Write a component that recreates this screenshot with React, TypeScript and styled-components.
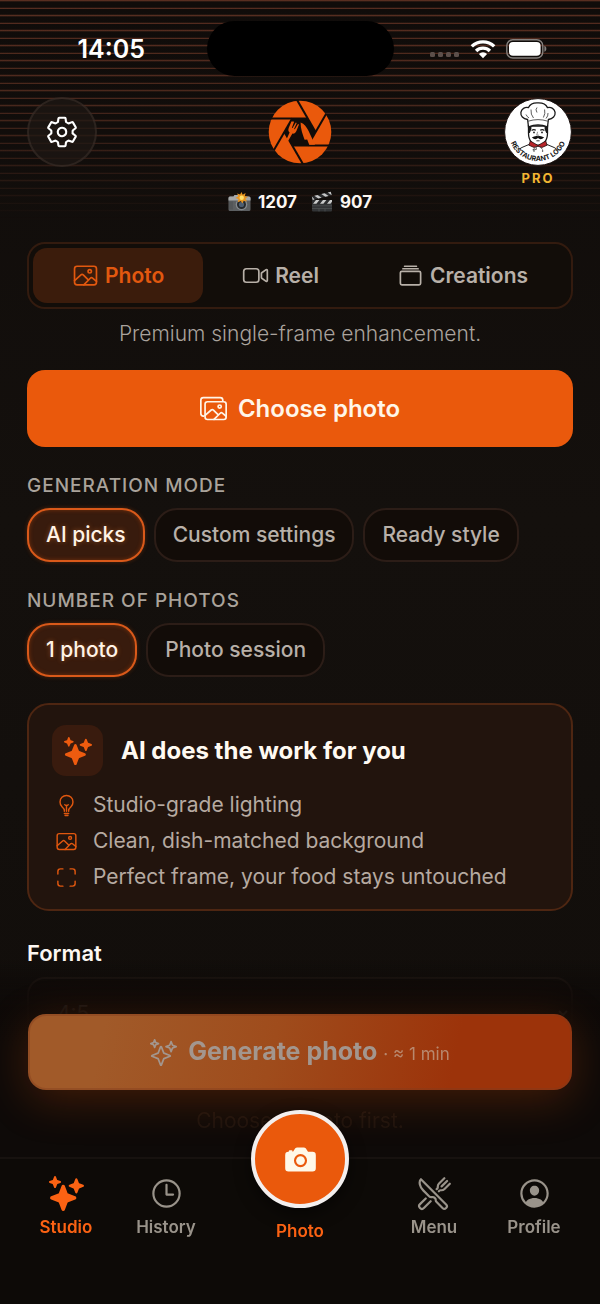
import React, { useState } from "react";
import styled, { createGlobalStyle, css } from "styled-components";
import {
  IoAlbumsOutline,
  IoBulbOutline,
  IoCamera,
  IoImageOutline,
  IoImagesOutline,
  IoPersonCircleOutline,
  IoRestaurantOutline,
  IoScanOutline,
  IoSettingsOutline,
  IoSparkles,
  IoSparklesOutline,
  IoTimeOutline,
  IoVideocamOutline,
} from "react-icons/io5";

const GlobalStyle = createGlobalStyle`
  *, *::before, *::after { box-sizing: border-box; }
  body { margin: 0; background: #120e0b; }
  button, select { font: inherit; color: inherit; margin: 0; }
  button { border: 0; padding: 0; background: none; cursor: pointer; }
  svg { display: block; flex: none; }
`;

const Page = styled.div`
  position: relative;
  min-height: 100vh;
  font-family: Inter, "Liberation Sans", sans-serif;
  font-size: 21px;
  line-height: 24px;
  color: #b3aba4;
  background: linear-gradient(#100c0a, #14100d 40%, #110d0a);
`;

/* Thin horizontal lines that fade out below the header. */
const Backdrop = styled.div`
  position: absolute;
  inset: 0 0 auto;
  height: 222px;
  background: repeating-linear-gradient(
    rgba(168, 84, 58, 0.48) 0 1px,
    rgba(168, 84, 58, 0.16) 1px 2px,
    transparent 2px 7px,
    rgba(168, 84, 58, 0.12) 7px 8px,
    rgba(168, 84, 58, 0.46) 8px 9px,
    transparent 9px 14px,
    rgba(168, 84, 58, 0.12) 14px 15px
  );
  mask-image: linear-gradient(#000, rgba(0, 0, 0, 0.8) 45%, rgba(0, 0, 0, 0.5) 70%, transparent);
`;

const StatusBar = styled.div`
  position: relative;
  display: grid;
  grid-template-columns: 1fr 187px 1fr;
  align-items: center;
  padding-top: 21px;
  color: #fff;
`;

const Clock = styled.time`
  padding-left: 16px;
  text-align: center;
  font-size: 25px;
  line-height: 30px;
  font-weight: 600;
`;

const Island = styled.div`
  height: 55px;
  border-radius: 28px;
  background: #000;
`;

const Indicators = styled.div`
  display: flex;
  align-items: center;
  justify-content: center;
  gap: 10px;
  padding-right: 17px;
`;

const Header = styled.header`
  position: relative;
  display: grid;
  grid-template-columns: 1fr auto 1fr;
  align-items: start;
  padding: 21px 27px 0;
`;

const RoundButton = styled.button`
  display: grid;
  place-items: center;
  width: 70px;
  height: 70px;
  border: 2px solid rgba(255, 220, 200, 0.08);
  border-radius: 50%;
  background: rgba(30, 23, 20, 0.72);
  color: #fff;
  font-size: 34px;
`;

const Brand = styled.div`
  display: grid;
  place-items: center;
  height: 70px;
`;

const Account = styled.button`
  justify-self: end;
  display: flex;
  flex-direction: column;
  align-items: center;
  gap: 2px;
  width: 70px;
`;

const Plan = styled.span`
  font-size: 13px;
  line-height: 18px;
  font-weight: 700;
  letter-spacing: 2px;
  color: #f2b632;
`;

const Credits = styled.div`
  position: relative;
  display: flex;
  justify-content: center;
  gap: 14px;
  margin-top: 4px;
`;

const Credit = styled.span`
  display: flex;
  align-items: center;
  gap: 7px;
  font-size: 17px;
  line-height: 20px;
  font-weight: 700;
  color: #fdf8f3;
`;

const Main = styled.main`
  position: relative;
  padding: 29px 27px 230px;
`;

const Tabs = styled.div`
  display: flex;
  padding: 4px;
  border: 2px solid #331b0f;
  border-radius: 18px;
  background: #120d09;
`;

const Tab = styled.button<{ $active: boolean }>`
  flex: 1 1 auto;
  display: flex;
  align-items: center;
  justify-content: center;
  gap: 6px;
  height: 55px;
  border-radius: 14px;
  font-weight: 600;
  color: ${(p) => (p.$active ? "#e2580f" : "#b8b0a8")};
  background: ${(p) => (p.$active ? "#3b1c0c" : "transparent")};
  svg { font-size: 27px; }
`;

const Tagline = styled.p`
  margin: 13px 0 24px;
  text-align: center;
  font-weight: 300;
  color: #aaa39d;
`;

const ActionButton = styled.button`
  display: flex;
  align-items: center;
  justify-content: center;
  gap: 11px;
  width: 100%;
  height: 77px;
  border-radius: 18px;
  font-size: 24px;
  line-height: 28px;
  font-weight: 600;
  color: #fff6e9;
  background: #ea590c;
  svg { font-size: 27px; }
`;

const Group = styled.section`
  margin-top: 27px;
`;

const GroupTitle = styled.h2`
  margin: 0 0 10px;
  font-size: 19px;
  line-height: 24px;
  font-weight: 500;
  letter-spacing: 1px;
  text-transform: uppercase;
  color: #aaa39b;
`;

const Chips = styled.div`
  display: flex;
  gap: 9px;
`;

const Chip = styled.button<{ $active: boolean }>`
  height: 54px;
  padding: 0 17px;
  border: 2px solid #2c1d17;
  border-radius: 23px;
  font-weight: 500;
  color: #b8b0a8;
  background: #120c08;
  ${(p) =>
    p.$active &&
    css`
      border-color: #d9591a;
      color: #fff3e6;
      background: #381b0d;
      text-shadow: 0 0 5px rgba(255, 140, 60, 0.4);
      box-shadow: 0 0 4px rgba(234, 89, 12, 0.3), inset 0 0 4px rgba(234, 89, 12, 0.35);
    `}
`;

const Card = styled.section`
  margin-top: 26px;
  padding: 20px 23px 14px;
  border: 2px solid #4e2612;
  border-radius: 22px;
  background: #22140d;
`;

const CardHead = styled.div`
  display: flex;
  align-items: center;
  gap: 18px;
  margin-bottom: 11px;
`;

const IconTile = styled.span`
  display: grid;
  place-items: center;
  width: 51px;
  height: 51px;
  border-radius: 14px;
  background: #391b0e;
  color: #ee5b0f;
  font-size: 28px;
`;

const CardTitle = styled.h2`
  margin: 0;
  font-size: 24px;
  line-height: 28px;
  font-weight: 700;
  color: #fffaf2;
`;

const Features = styled.ul`
  margin: 0;
  padding: 0;
  list-style: none;
`;

const Feature = styled.li`
  display: flex;
  align-items: center;
  gap: 15px;
  height: 36px;
  padding-left: 3px;
  color: #b6aaa1;
  svg { font-size: 23px; color: #e0570f; }
`;

const FieldLabel = styled.label`
  display: block;
  margin: 30px 0 12px;
  font-size: 22px;
  font-weight: 600;
  color: #fdf8f3;
`;

const Select = styled.select`
  display: block;
  width: 100%;
  height: 72px;
  padding: 0 24px;
  border: 2px solid #261c17;
  border-radius: 18px;
  background: #120d0a;
`;

/* Stays over the scrolled page: the submit area and the navigation. */
const Dock = styled.div`
  position: fixed;
  inset: auto 0 0;
`;

const Submit = styled.div`
  padding: 54px 28px 0;
  height: 197px;
  overflow: hidden;
  text-align: center;
  background: linear-gradient(rgba(14, 10, 8, 0), rgba(14, 10, 8, 0.6) 10%, rgba(14, 10, 8, 0.95) 24%, #0e0a08 44%);
`;

const GenerateButton = styled(ActionButton)`
  height: 76px;
  border: 2px solid rgba(130, 60, 30, 0.4);
  font-size: 25px;
  font-weight: 700;
  color: #a3968e;
  background: linear-gradient(102deg, #a15a29 14%, #9f4c1c 45%, #9c330a 78%) border-box;
  box-shadow: 0 10px 44px rgba(190, 70, 10, 0.3);
`;

const Estimate = styled.small`
  margin-left: 6px;
  font-size: 17px;
  font-weight: 400;
  color: #b8886e;
`;

const Hint = styled.p`
  margin: 19px 0 0;
  color: rgba(170, 110, 70, 0.1);
`;

const Nav = styled.nav`
  position: relative;
  display: grid;
  grid-template-columns: 1fr 1fr 168px 1fr 1fr;
  align-items: start;
  height: 147px;
  padding: 0 16px;
  border-top: 2px solid #17120f;
  background: #0d0a07;
`;

const NavItem = styled.button<{ $active?: boolean }>`
  display: flex;
  flex-direction: column;
  align-items: center;
  gap: 4px;
  padding-top: 17px;
  font-size: 17px;
  line-height: 24px;
  font-weight: 600;
  color: ${(p) => (p.$active ? "#fb6213" : "#99938a")};
  svg { font-size: 35px; }
`;

const CaptureItem = styled(NavItem)`
  gap: 11px;
  margin-top: -49px;
  padding-top: 0;
`;

const Capture = styled.span`
  display: grid;
  place-items: center;
  width: 98px;
  height: 98px;
  border: 4px solid #f3efee;
  border-radius: 50%;
  background: #ea590c;
  color: #fff8e8;
  box-shadow: 0 6px 16px rgba(0, 0, 0, 0.5);
`;

function SignalDots() {
  return (
    <svg width="30" height="18" viewBox="0 0 30 18" fill="#5c4f4a" aria-hidden="true">
      {[0, 8, 16, 24].map((x) => (
        <rect key={x} x={x} y="12" width="5" height="5" rx="1.5" />
      ))}
    </svg>
  );
}

function Wifi() {
  return (
    <svg width="26" height="20" viewBox="0 0 26 20" aria-hidden="true">
      <g fill="none" stroke="#fff" strokeWidth="3.4">
        <path d="M1.8 7.4a16 16 0 0 1 22.4 0" />
        <path d="M6.1 12a9.8 9.8 0 0 1 13.8 0" />
      </g>
      <path d="M13 19.2 8.9 15a5.8 5.8 0 0 1 8.200 0z" fill="#fff" />
    </svg>
  );
}

function Battery() {
  return (
    <svg width="41" height="20" viewBox="0 0 41 20" aria-hidden="true">
      <rect x="0.8" y="0.8" width="36" height="18.2" rx="6" fill="none" stroke="#85807d" strokeWidth="1.4" />
      <rect x="3" y="3" width="31.6" height="13.8" rx="4" fill="#fff" />
      <path d="M38.4 6.8c2.6.8 2.6 5.2 0 6z" fill="#85807d" />
    </svg>
  );
}

function ApertureLogo() {
  return (
    <svg width="64" height="64" viewBox="-32 -32 64 64" role="img" aria-label="Studio logo">
      <circle r="31.3" fill="#ea590c" />
      <path d="M-15.6 0-7.8-13.5H7.8L15.6 0 7.8 13.5H-7.8z" fill="#120c09" />
      <g stroke="#120c09" strokeWidth="2">
        {[0, 60, 120, 180, 240, 300].map((a) => (
          <path key={a} d="M-29-13.5H8" transform={`rotate(${a})`} />
        ))}
      </g>
      <g fill="#ea590c">
        <path d="M-8.6-10.400-11.200-4.200c-.8 2-.6 3.600.8 4.800L-14 8.600l1.800 1L-7.600 1.600c2 .2 3.200-.8 4-2.600l2.600-6.400-1-.5-3.200 5.200-.7-.4 2.600-5.900-.9-.4-3.200 5.400-.7-.3 2.200-6-.9-.3z" />
        <path d="M.6-9.600c3.800 1.200 6 4.400 8 8.600L15 12.800H9.200L7.200 7.600 4.600 7.800C2.800 2.600.400-3.400.6-9.600z" />
      </g>
    </svg>
  );
}

function ChefLogo() {
  return (
    <svg width="70" height="70" viewBox="0 0 70 70" role="img" aria-label="Restaurant logo">
      <defs>
        <path id="badge-curve" d="M5.600 37A29.500 29.500 0 0 0 64.400 37" />
      </defs>
      <circle cx="35" cy="35" r="33.4" fill="#fff" stroke="#1b1210" strokeWidth="1" />
      <path d="M26 47.5 20 50q-2 .7-3.4 2M44 47.5l6 2.5q2 .7 3.4 2" fill="none" stroke="#222" strokeWidth="1" strokeLinecap="round" />
      <path d="M25.5 29v7c0 8 4.500 12.500 9.500 12.500S44.500 44 44.500 36v-7z" fill="#fff" stroke="#1a1a1a" strokeWidth="1.300" />
      <path d="M25.400 28.500h3v3.600l-1.600 3.900h-1.400zM44.600 28.500h-3v3.600l1.600 3.900h1.400z" fill="#1a1a1a" />
      <path d="M28.600 33.400q2-1.300 4.200-.2M37.200 33.200q2.200-1.100 4.200.2" fill="none" stroke="#1a1a1a" strokeWidth="1.200" />
      <circle cx="31" cy="35.400" r=".9" fill="#1a1a1a" />
      <circle cx="39" cy="35.400" r=".9" fill="#1a1a1a" />
      <path d="M34.600 34.800l-.9 3.400h2.400" fill="none" stroke="#444" strokeWidth=".6" />
      <path d="M35 39.300c-2.400-1-4 .3-6.200 1 2.200 2.400 4.700 2.200 6.200.8 1.500 1.400 4 1.600 6.200-.8-2.200-.7-3.800-2-6.200-1z" fill="#111" />
      <path d="M33.400 43.800h3.200" stroke="#222" strokeWidth=".9" />
      <path d="M27.300 44 35 48.400 42.700 44l1.400 4.200-5 2.200L35 49.300l-4.100 1.100-5-2.200z" fill="#b8252a" stroke="#231010" strokeWidth=".8" />
      <path d="M33 49.600 29.800 53l3.600-.6zM37 49.600l2.600 3" fill="#fff" stroke="#222" strokeWidth=".7" />
      <circle cx="31" cy="54" r=".7" fill="#222" />
      <circle cx="39.600" cy="54" r=".7" fill="#222" />
      <path
        d="M25.500 29.800 24.600 22.500c-4.600-.6-7.200-3.700-6.700-7.100.5-3.600 4-5.600 7.600-4.800C27 7.300 30.800 5.700 34.800 5.900c4.400-.2 8.200 1.500 9.700 4.700 3.700-.8 7.100 1.200 7.600 4.800.4 3.400-2.200 6.500-6.700 7.100l-.9 7.300c-5.700-2.300-13.300-2.300-19 0z"
        fill="#fff"
        stroke="#1a1a1a"
        strokeWidth="1.300"
      />
      <path d="M25.200 24.200q9.800-3.200 19.600 0M28 12.500q-.5 5 2.500 8.500M34 10.500q-2 2 0 5M41.600 12.500q1 4-1.200 8M45 16q.3 3-2 5.500M23 17.500q1.200 2.500 3 3.500" fill="none" stroke="#333" strokeWidth=".8" />
      <text fontFamily="Inter, sans-serif" fontSize="7" fontWeight="700" fill="#161616" textAnchor="middle">
        <textPath href="#badge-curve" startOffset="50%">
          RESTAURANT LOGO
        </textPath>
      </text>
    </svg>
  );
}

function FlashCamera() {
  return (
    <svg width="23" height="20" viewBox="0 0 23 20" aria-hidden="true">
      <path d="M1.500 4.500h4l1-1.500h4l1 1.500h9.500q1.500 0 1.500 1.500v11.500q0 1.500-1.500 1.500h-19Q.5 19 .5 17.500V6q0-1 1-1.500z" fill="#5c5f61" />
      <path d="M.5 6q0-1.500 1.500-1.500h3.500l1-1.500h4l1 1.500H21q1.500 0 1.500 1.500v2.500H.5z" fill="#a5a7a8" />
      <path d="M2 9.500v8M4 9.500v8" stroke="#47494b" strokeWidth=".8" />
      <circle cx="13.500" cy="12.500" r="5.800" fill="#85898d" />
      <circle cx="13.500" cy="12.500" r="4.500" fill="#26292c" />
      <circle cx="13.500" cy="12.500" r="2.600" fill="#4d5d70" />
      <path d="m13.500 0 1.200 2.800L17.600 1l-.8 3.200 3.200.6-2.600 1.800 1.500 2.800-3.200-.6-1.200 2.700-1.700-2.600-3 1.300.7-3.200-3-1 2.800-1.800-1.200-2.600 3 .8z" fill="#e8951f" />
      <circle cx="13.700" cy="5.700" r="2.200" fill="#ffe06a" />
    </svg>
  );
}

function Clapper() {
  return (
    <svg width="22" height="22" viewBox="0 0 22 22" aria-hidden="true">
      <path d="M1 10h20v9.500q0 1-1 1H2q-1 0-1-1z" fill="#323436" />
      <path d="M1 14.800h20M1 17.500h20M8 17.500v3M14 17.500v3" stroke="#56595b" strokeWidth=".6" />
      <path d="M1 9h20v3.800H1z" fill="#2a2b2d" />
      <path d="m2 12.800 3-3.800h3.400l-3 3.800zM9 12.800 12 9h3.400l-3 3.800zM16 12.800 19 9h2v1.800l-1.600 2z" fill="#c9caca" />
      <path d="M.8 5.400 19.800.7l.9 3.500L1.700 8.900z" fill="#2a2b2d" />
      <path d="m3.300 4.800 4 2.700 3.300-.8-4-2.700zM10.300 3l4 2.700 3.300-.8-4-2.700zM16.800 1.500l3.900 2.700-.9-3.500zM.8 5.400l.9 3.500 1.900-.5z" fill="#c6c7c7" />
    </svg>
  );
}

const TABS = [
  { label: "Photo", icon: <IoImageOutline /> },
  { label: "Reel", icon: <IoVideocamOutline /> },
  { label: "Creations", icon: <IoAlbumsOutline /> },
];

const FEATURES = [
  { label: "Studio-grade lighting", icon: <IoBulbOutline /> },
  { label: "Clean, dish-matched background", icon: <IoImageOutline /> },
  { label: "Perfect frame, your food stays untouched", icon: <IoScanOutline /> },
];

function ChipGroup({ title, options }: { title: string; options: string[] }) {
  const [selected, setSelected] = useState(options[0]);
  return (
    <Group aria-label={title}>
      <GroupTitle>{title}</GroupTitle>
      <Chips>
        {options.map((option) => (
          <Chip
            key={option}
            type="button"
            $active={option === selected}
            aria-pressed={option === selected}
            onClick={() => setSelected(option)}
          >
            {option}
          </Chip>
        ))}
      </Chips>
    </Group>
  );
}

export default function App() {
  const [tab, setTab] = useState("Photo");
  return (
    <Page>
      <GlobalStyle />
      <Backdrop />
      <StatusBar>
        <Clock>14:05</Clock>
        <Island />
        <Indicators>
          <SignalDots />
          <Wifi />
          <Battery />
        </Indicators>
      </StatusBar>

      <Header>
        <RoundButton type="button" aria-label="Settings">
          <IoSettingsOutline />
        </RoundButton>
        <Brand>
          <ApertureLogo />
        </Brand>
        <Account type="button">
          <ChefLogo />
          <Plan>PRO</Plan>
        </Account>
      </Header>
      <Credits>
        <Credit>
          <FlashCamera />
          1207
        </Credit>
        <Credit>
          <Clapper />
          907
        </Credit>
      </Credits>

      <Main>
        <Tabs role="tablist">
          {TABS.map(({ label, icon }) => (
            <Tab
              key={label}
              type="button"
              role="tab"
              aria-selected={tab === label}
              $active={tab === label}
              onClick={() => setTab(label)}
            >
              {icon}
              {label}
            </Tab>
          ))}
        </Tabs>
        <Tagline>Premium single-frame enhancement.</Tagline>
        <ActionButton type="button">
          <IoImagesOutline />
          Choose photo
        </ActionButton>

        <ChipGroup title="Generation mode" options={["AI picks", "Custom settings", "Ready style"]} />
        <ChipGroup title="Number of photos" options={["1 photo", "Photo session"]} />

        <Card>
          <CardHead>
            <IconTile>
              <IoSparkles />
            </IconTile>
            <CardTitle>AI does the work for you</CardTitle>
          </CardHead>
          <Features>
            {FEATURES.map(({ label, icon }) => (
              <Feature key={label}>
                {icon}
                {label}
              </Feature>
            ))}
          </Features>
        </Card>

        <FieldLabel htmlFor="format">Format</FieldLabel>
        <Select id="format" defaultValue="4:5">
          <option>4:5</option>
          <option>1:1</option>
          <option>16:9</option>
        </Select>
      </Main>

      <Dock>
        <Submit>
          <GenerateButton type="button">
            <IoSparklesOutline />
            <span>
              Generate photo
              <Estimate>· ≈ 1 min</Estimate>
            </span>
          </GenerateButton>
          <Hint>Choose a photo first.</Hint>
        </Submit>
        <Nav aria-label="Main">
          <NavItem type="button" $active>
            <IoSparkles />
            Studio
          </NavItem>
          <NavItem type="button">
            <IoTimeOutline />
            History
          </NavItem>
          <CaptureItem type="button" $active>
            <Capture>
              <IoCamera />
            </Capture>
            Photo
          </CaptureItem>
          <NavItem type="button">
            <IoRestaurantOutline />
            Menu
          </NavItem>
          <NavItem type="button">
            <IoPersonCircleOutline />
            Profile
          </NavItem>
        </Nav>
      </Dock>
    </Page>
  );
}
